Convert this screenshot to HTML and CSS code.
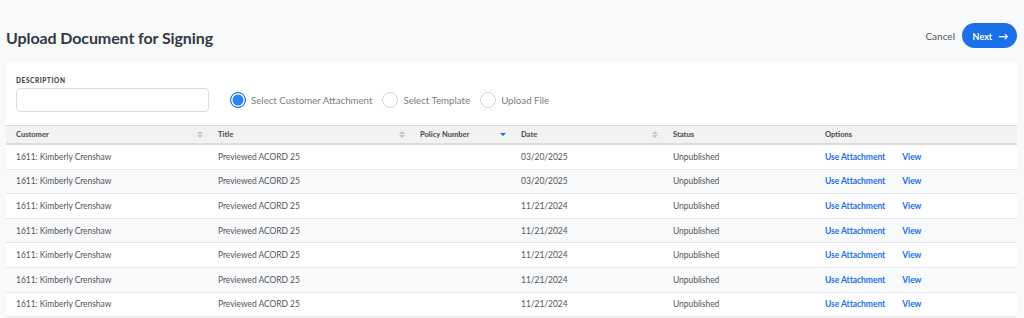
FILE: index.html
```html
<!DOCTYPE html>
<html lang="en">
<head>
  <meta charset="UTF-8">
  <title>Upload Document for Signing</title>
  <link rel="stylesheet" href="styles.css">
</head>
<body>
  <div class="topbar">
    <h1>Upload Document for Signing</h1>
    <div class="actions">
      <a class="cancel" href="#">Cancel</a>
      <button class="next">Next <span class="arrow">&rarr;</span></button>
    </div>
  </div>

  <div class="card">
    <div class="filters">
      <div class="field">
        <label for="desc">DESCRIPTION</label>
        <input type="text" id="desc">
      </div>
      <div class="radios">
        <label class="radio"><span class="dot on"></span>Select Customer Attachment</label>
        <label class="radio"><span class="dot"></span>Select Template</label>
        <label class="radio"><span class="dot"></span>Upload File</label>
      </div>
    </div>

    <table class="docs">
      <colgroup>
        <col style="width:202px"><col style="width:202px"><col style="width:101px">
        <col style="width:152px"><col style="width:152px"><col style="width:202px">
      </colgroup>
      <thead>
        <tr>
          <th>Customer <span class="sort"></span></th>
          <th>Title <span class="sort"></span></th>
          <th>Policy Number <span class="sort desc"></span></th>
          <th>Date <span class="sort"></span></th>
          <th>Status</th>
          <th>Options</th>
        </tr>
      </thead>
      <tbody id="rows"></tbody>
    </table>
  </div>

  <script>
    var dates = ["03/20/2025", "03/20/2025", "11/21/2024", "11/21/2024", "11/21/2024", "11/21/2024", "11/21/2024"];
    var html = "";
    dates.forEach(function (d) {
      html += "<tr>" +
        "<td>1611: Kimberly Crenshaw</td>" +
        "<td>Previewed ACORD 25</td>" +
        "<td></td>" +
        "<td>" + d + "</td>" +
        "<td>Unpublished</td>" +
        "<td class=\"opts\"><a href=\"#\">Use Attachment</a><a href=\"#\">View</a></td>" +
        "</tr>";
    });
    document.getElementById("rows").innerHTML = html;
  </script>
</body>
</html>
```

FILE: styles.css
```css
body {
  margin: 0;
  background: #f8f9fb;
  font-family: Lato, 'Noto Sans', sans-serif;
  color: #444;
}
.topbar {
  display: flex;
  justify-content: space-between;
  align-items: center;
  padding: 23px 7px 0 6px;
  height: 25px;
}
h1 {
  margin: 3px 0 0;
  font-size: 16px;
  font-weight: 700;
  color: #333a44;
  letter-spacing: -0.1px;
}
.actions {
  display: flex;
  align-items: center;
  gap: 7px;
}
.cancel {
  color: #555;
  text-decoration: none;
  font-size: 10px;
}
.next {
  background: #1b6fe8;
  color: white;
  border: none;
  border-radius: 13px;
  height: 25px;
  width: 55px;
  font-family: inherit;
  font-weight: 700;
  font-size: 9px;
  padding: 0 0 0 2px;
}
.next .arrow {
  margin-left: 4px;
  font-size: 10px;
}
.card {
  background: white;
  margin: 14px 7px 0 6px;
}
.filters {
  display: flex;
  align-items: flex-end;
  padding: 15px 10px 13px;
}
.field label {
  display: block;
  font-size: 6.5px;
  font-weight: 900;
  letter-spacing: 0.6px;
  color: #444;
  margin-bottom: 4px;
}
.field input {
  width: 193px;
  height: 24px;
  box-sizing: border-box;
  border: 1px solid #dcdde0;
  border-radius: 4px;
  margin: 0;
}
.radios {
  display: flex;
  align-items: center;
  margin-left: 21px;
  margin-bottom: 4px;
  gap: 10px;
}
.radio {
  display: flex;
  align-items: center;
  font-size: 9.7px;
  color: #7a7d84;
  gap: 5px;
}
.dot {
  width: 16px;
  height: 16px;
  box-sizing: border-box;
  border: 1px solid #d2d5da;
  border-radius: 50%;
  background: white;
}
.dot.on {
  border: 1.5px solid #1b6fe8;
  background: #2a82f7;
  box-shadow: inset 0 0 0 1.5px white;
}
.docs {
  width: 100%;
  border-collapse: collapse;
  table-layout: fixed;
}
.docs th {
  background: #f2f2f2;
  border-top: 1px solid #d9d9d9;
  border-bottom: 2px solid #dcdcdc;
  height: 17px;
  padding: 0 10px;
  text-align: left;
  font-size: 7.5px;
  font-weight: 900;
  color: #555;
  position: relative;
}
.sort {
  position: absolute;
  right: 5px;
  top: 5px;
  width: 0;
  height: 0;
  border-left: 3px solid transparent;
  border-right: 3px solid transparent;
  border-bottom: 3px solid #c4c4c4;
}
.sort::after {
  content: "";
  position: absolute;
  left: -3px;
  top: 4px;
  border-left: 3px solid transparent;
  border-right: 3px solid transparent;
  border-top: 3px solid #c4c4c4;
}
.sort.desc {
  border-bottom-color: transparent;
  top: 3px;
}
.sort.desc::after {
  border-top-color: #1b6fe8;
  left: -3.5px;
  border-left-width: 3.5px;
  border-right-width: 3.5px;
  border-top-width: 3.5px;
}
.docs td {
  height: 23.6px;
  padding: 0 10px;
  border-bottom: 1px solid #e6e7ea;
  font-size: 8.5px;
  letter-spacing: -0.05px;
  color: #555;
  white-space: nowrap;
}
.docs tbody tr:nth-child(even) td {
  background: #f8f9fb;
}
.opts a {
  color: #1b6fe8;
  font-weight: 700;
  text-decoration: none;
  margin-right: 17px;
}
```
